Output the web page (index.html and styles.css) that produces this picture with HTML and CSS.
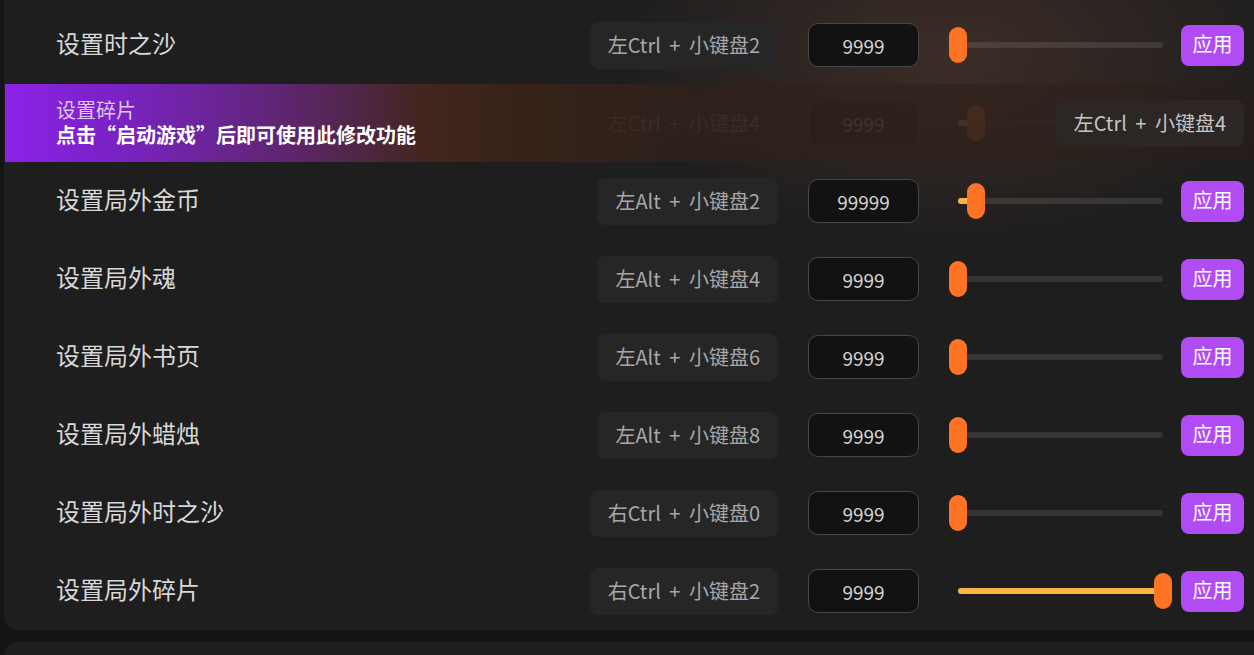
FILE: index.html
```html
<!DOCTYPE html>
<html lang="zh-CN">
<head>
  <meta charset="UTF-8">
  <title>修改器设置</title>
  <link rel="stylesheet" href="styles.css">
</head>
<body>

  <div class="card">
    <div class="row">
      <div class="label">设置时之沙</div>
      <div class="hotkey">左Ctrl + 小键盘2</div>
      <div class="value">9999</div>
      <div class="slider"><div class="track"></div><div class="thumb" style="left: 0px"></div></div>
      <button class="apply">应用</button>
    </div>

    <!-- 未启动游戏时的提示行 -->
    <div class="row locked">
      <div class="label"></div>
      <div class="hotkey">左Ctrl + 小键盘4</div>
      <div class="value">9999</div>
      <div class="slider"><div class="track"></div><div class="fill" style="width: 18px"></div><div class="thumb" style="left: 18px"></div></div>
      <div class="apply-space"></div>
      <div class="notice">
        <div class="notice-text">
          <div class="notice-title">设置碎片</div>
          <div class="notice-msg">点击“启动游戏”后即可使用此修改功能</div>
        </div>
        <div class="notice-key">左Ctrl + 小键盘4</div>
      </div>
    </div>

    <div class="row">
      <div class="label">设置局外金币</div>
      <div class="hotkey">左Alt + 小键盘2</div>
      <div class="value">99999</div>
      <div class="slider"><div class="track"></div><div class="fill" style="width: 18px"></div><div class="thumb" style="left: 18px"></div></div>
      <button class="apply">应用</button>
    </div>

    <div class="row">
      <div class="label">设置局外魂</div>
      <div class="hotkey">左Alt + 小键盘4</div>
      <div class="value">9999</div>
      <div class="slider"><div class="track"></div><div class="thumb" style="left: 0px"></div></div>
      <button class="apply">应用</button>
    </div>

    <div class="row">
      <div class="label">设置局外书页</div>
      <div class="hotkey">左Alt + 小键盘6</div>
      <div class="value">9999</div>
      <div class="slider"><div class="track"></div><div class="thumb" style="left: 0px"></div></div>
      <button class="apply">应用</button>
    </div>

    <div class="row">
      <div class="label">设置局外蜡烛</div>
      <div class="hotkey">左Alt + 小键盘8</div>
      <div class="value">9999</div>
      <div class="slider"><div class="track"></div><div class="thumb" style="left: 0px"></div></div>
      <button class="apply">应用</button>
    </div>

    <div class="row">
      <div class="label">设置局外时之沙</div>
      <div class="hotkey">右Ctrl + 小键盘0</div>
      <div class="value">9999</div>
      <div class="slider"><div class="track"></div><div class="thumb" style="left: 0px"></div></div>
      <button class="apply">应用</button>
    </div>

    <div class="row">
      <div class="label">设置局外碎片</div>
      <div class="hotkey">右Ctrl + 小键盘2</div>
      <div class="value">9999</div>
      <div class="slider"><div class="track"></div><div class="fill" style="width: 205px"></div><div class="thumb" style="left: 205px"></div></div>
      <button class="apply">应用</button>
    </div>
  </div>

  <div class="card next"></div>

</body>
</html>
```

FILE: styles.css
```css
body {
  margin: 0;
  padding-left: 4px;
  background-color: #141414;
  font-family: "Noto Sans CJK SC", "Noto Sans", sans-serif;
  overflow: hidden;
}

.card {
  background-color: #1e1e1e;
  background-image: radial-gradient(ellipse 340px 190px at 950px 55px, rgba(120, 72, 55, 0.34), rgba(120, 72, 55, 0));
  border-radius: 0 0 0 14px;
  padding-top: 6px;
  margin-right: -20px;
}

.card.next {
  margin-top: 12px;
  height: 40px;
  padding-top: 0;
  border-radius: 14px 0 0 0;
  background-image: none;
}

.row {
  position: relative;
  height: 78px;
  display: flex;
  align-items: center;
  padding-left: 52px;
}

.label {
  flex: 1;
  font-size: 24px;
  color: #d8d8d8;
  margin-bottom: 5px;
}

.hotkey {
  height: 45px;
  padding: 0 18px 2px;
  display: flex;
  align-items: center;
  background-color: #262626;
  border-radius: 8px;
  font-size: 20px;
  word-spacing: 4px;
  color: #a8a8a8;
  margin-right: 30px;
}

.value {
  width: 109px;
  height: 42px;
  border: 1.5px solid #474747;
  border-radius: 10px;
  background-color: #121212;
  color: #d4d4d4;
  font-size: 19px;
  display: flex;
  align-items: center;
  justify-content: center;
  margin-right: 30px;
}

.slider {
  position: relative;
  width: 223px;
  height: 36px;
  margin-right: 9px;
}

.track, .fill {
  position: absolute;
  left: 9px;
  top: 15px;
  height: 6px;
  border-radius: 3px;
}

.track {
  right: 9px;
  background-color: rgba(255, 255, 255, 0.1);
}

.fill {
  background-color: #ffb347;
}

.thumb {
  position: absolute;
  top: 0;
  width: 18px;
  height: 36px;
  border-radius: 9px;
  background-color: #ff7424;
}

.apply {
  width: 63px;
  height: 41px;
  border: none;
  border-radius: 8px;
  background-color: #b14cf5;
  color: #fff;
  font-family: inherit;
  font-size: 20px;
  padding: 0 0 3px;
  margin-right: 30px;
}

.apply-space {
  width: 63px;
  margin-right: 30px;
}

/* locked row */
.row.locked .hotkey,
.row.locked .value,
.row.locked .slider {
  opacity: 0.22;
}

.notice {
  position: absolute;
  left: 1px;
  top: 0;
  right: 0;
  bottom: 0;
  display: flex;
  align-items: center;
  padding-left: 51px;
  padding-right: 30px;
  background: linear-gradient(90deg, #8b22e6 0%, #7a22c4 9%, #652585 19%, #52264c 27%, #43261d 33%, rgba(62, 36, 24, 0.8) 40%, rgba(50, 32, 25, 0.6) 55%, rgba(42, 29, 24, 0.5) 100%);
}

.notice-text {
  flex: 1;
}

.notice-title {
  font-size: 20px;
  line-height: 24px;
  color: #dfc8f0;
}

.notice-msg {
  font-size: 20px;
  line-height: 26px;
  font-weight: bold;
  color: #fff;
}

.notice-key {
  height: 45px;
  padding: 0 18px 2px;
  display: flex;
  align-items: center;
  background-color: #2c2624;
  border-radius: 8px;
  font-size: 20px;
  word-spacing: 4px;
  color: #c4c4c4;
}
```
